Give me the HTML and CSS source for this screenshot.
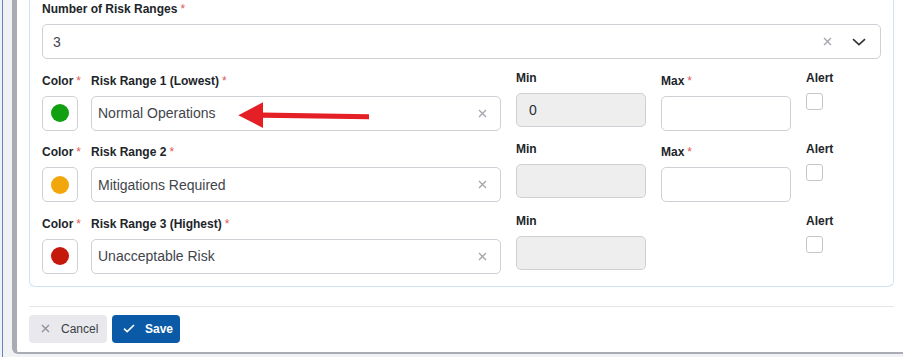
FILE: index.html
```html
<!DOCTYPE html>
<html>
<head>
<meta charset="utf-8">
<link rel="stylesheet" href="styles.css">
</head>
<body>
<div class="page">
  <div class="dialog">
    <div class="panel">
      <div class="field">
        <label class="lbl">Number of Risk Ranges<span class="req">*</span></label>
        <div class="select">
          <span class="select-val">3</span>
          <svg class="sel-clear" width="9" height="9" viewBox="0 0 9 9"><path d="M1 1L8 8M8 1L1 8" stroke="#a3a7ad" stroke-width="1.4" fill="none"/></svg>
          <svg class="sel-chev" width="14" height="8" viewBox="0 0 14 8"><path d="M1 1.2L7 6.6L13 1.2" stroke="#333" stroke-width="1.6" fill="none"/></svg>
        </div>
      </div>

      <div class="ranges">
        <div class="range">
          <div class="col col-color"><label class="lbl">Color<span class="req">*</span></label><div class="swatch"><span class="dot dot-green"></span></div></div>
          <div class="col col-name"><label class="lbl">Risk Range 1 (Lowest)<span class="req">*</span></label><div class="text-input"><span>Normal Operations</span><svg width="9" height="9" viewBox="0 0 9 9"><path d="M1 1L8 8M8 1L1 8" stroke="#a3a7ad" stroke-width="1.4" fill="none"/></svg></div></div>
          <div class="col col-num col-up"><label class="lbl">Min</label><div class="num-input disabled">0</div></div>
          <div class="col col-num"><label class="lbl">Max<span class="req">*</span></label><div class="num-input"></div></div>
          <div class="col col-alert col-up"><label class="lbl">Alert</label><span class="checkbox"></span></div>
        </div>

        <div class="range">
          <div class="col col-color"><label class="lbl">Color<span class="req">*</span></label><div class="swatch"><span class="dot dot-orange"></span></div></div>
          <div class="col col-name"><label class="lbl">Risk Range 2<span class="req">*</span></label><div class="text-input"><span>Mitigations Required</span><svg width="9" height="9" viewBox="0 0 9 9"><path d="M1 1L8 8M8 1L1 8" stroke="#a3a7ad" stroke-width="1.4" fill="none"/></svg></div></div>
          <div class="col col-num col-up"><label class="lbl">Min</label><div class="num-input disabled"></div></div>
          <div class="col col-num"><label class="lbl">Max<span class="req">*</span></label><div class="num-input"></div></div>
          <div class="col col-alert col-up"><label class="lbl">Alert</label><span class="checkbox"></span></div>
        </div>

        <div class="range">
          <div class="col col-color"><label class="lbl">Color<span class="req">*</span></label><div class="swatch"><span class="dot dot-red"></span></div></div>
          <div class="col col-name"><label class="lbl">Risk Range 3 (Highest)<span class="req">*</span></label><div class="text-input"><span>Unacceptable Risk</span><svg width="9" height="9" viewBox="0 0 9 9"><path d="M1 1L8 8M8 1L1 8" stroke="#a3a7ad" stroke-width="1.4" fill="none"/></svg></div></div>
          <div class="col col-num col-up"><label class="lbl">Min</label><div class="num-input disabled"></div></div>
          <div class="col col-num"></div>
          <div class="col col-alert col-up"><label class="lbl">Alert</label><span class="checkbox"></span></div>
        </div>
      </div>

      <svg class="arrow" width="180" height="40" viewBox="230 95 180 40">
        <polygon points="238.3,115.2 263,102.2 263,128" fill="#e41f26"/>
        <polygon points="262,112.4 369,114.2 369,119.2 262,117.8" fill="#e41f26"/>
      </svg>
    </div>

    <div class="footer">
      <button class="btn btn-cancel">
        <svg width="9" height="9" viewBox="0 0 9 9"><path d="M1 1L8 8M8 1L1 8" stroke="#8f939a" stroke-width="1.4" fill="none"/></svg>
        <span>Cancel</span>
      </button>
      <button class="btn btn-save">
        <svg width="12" height="9" viewBox="0 0 12 9"><path d="M1 4.6L4.2 7.6L11 1" stroke="#fff" stroke-width="1.6" fill="none"/></svg>
        <span>Save</span>
      </button>
    </div>
  </div>
</div>
</body>
</html>
```

FILE: styles.css
```css
html, body {
  margin: 0;
  padding: 0;
}
body {
  background: #f1f2f4;
  font-family: "Liberation Sans", Arial, sans-serif;
  width: 903px;
  height: 357px;
  overflow: hidden;
}
.page {
  margin-left: 2px;
  border-left: 1px solid #5a87c6;
  padding-left: 9px;
  padding-bottom: 3px;
  height: 357px;
  box-sizing: border-box;
}
.dialog {
  background: #fff;
  border-left: 5px solid #a9acb2;
  border-bottom: 2px solid #a9acb2;
  border-bottom-left-radius: 6px;
  padding: 0 9px 10px 12px;
  height: 354px;
  box-sizing: border-box;
}
.panel {
  position: relative;
  border: 1px solid #cfe3f4;
  border-top: none;
  border-radius: 0 0 6px 6px;
  padding: 2px 12px 12px 12px;
}
.field {
  display: flex;
  flex-direction: column;
}
.lbl {
  display: block;
  font-size: 12px;
  line-height: 15px;
  font-weight: bold;
  color: #212529;
  white-space: nowrap;
  margin-bottom: 7px;
}
.req {
  color: #e0595a;
  font-weight: normal;
  margin-left: 3px;
}
.select {
  height: 35px;
  box-sizing: border-box;
  border: 1px solid #cdd0d5;
  border-radius: 5px;
  display: flex;
  align-items: center;
  padding-left: 10px;
  padding-right: 14px;
}
.select-val {
  flex: 1;
  font-size: 14px;
  color: #3f454b;
}
.sel-clear {
  margin-right: 20px;
}
.ranges {
  display: flex;
  flex-direction: column;
  gap: 14.5px;
  margin-top: 14.5px;
}
.range {
  display: flex;
  gap: 15px;
  align-items: flex-start;
}
.col {
  display: flex;
  flex-direction: column;
}
.col-up {
  margin-top: -3px;
}
.col-color {
  width: 36px;
  margin-right: -2px;
}
.col-name {
  width: 410px;
}
.col-num {
  width: 130px;
}
.col-alert {
  flex: 1;
}
.swatch {
  width: 36px;
  height: 35px;
  box-sizing: border-box;
  border: 1px solid #cdd0d5;
  border-radius: 5px;
  display: flex;
  align-items: center;
  justify-content: center;
}
.dot {
  width: 18px;
  height: 18px;
  border-radius: 50%;
}
.dot-green { background: #12a012; }
.dot-orange { background: #f1a60b; }
.dot-red { background: #c5190b; }
.text-input {
  height: 35px;
  box-sizing: border-box;
  border: 1px solid #cdd0d5;
  border-radius: 5px;
  display: flex;
  align-items: center;
  justify-content: space-between;
  padding-left: 6px;
  padding-right: 13px;
  font-size: 14px;
  color: #3f454b;
}
.num-input {
  height: 35px;
  box-sizing: border-box;
  border: 1px solid #cdd0d5;
  border-radius: 5px;
  display: flex;
  align-items: center;
  padding-left: 12px;
  font-size: 14px;
  color: #2b3035;
}
.num-input.disabled {
  background: #eeeeee;
  height: 34px;
}
.checkbox {
  width: 17px;
  height: 17px;
  box-sizing: border-box;
  border: 1px solid #c3c6cb;
  border-radius: 3px;
  background: #fff;
}
.arrow {
  position: absolute;
  left: 200px;
  top: 95px;
}
.footer {
  margin-top: 19px;
  border-top: 1px solid #e6e7e9;
  padding-top: 8px;
  display: flex;
  gap: 5px;
}
.btn {
  height: 28px;
  border: none;
  border-radius: 4px;
  display: flex;
  align-items: center;
  font-family: "Liberation Sans", Arial, sans-serif;
  font-size: 12px;
  padding: 0;
  cursor: pointer;
}
.btn-cancel {
  width: 78px;
  background: #e9e9ed;
  color: #3a3f45;
  padding-left: 12px;
  gap: 11px;
}
.btn-save {
  width: 68px;
  background: #0b5aa7;
  color: #fff;
  font-weight: bold;
  padding-left: 11px;
  gap: 10px;
}
```
